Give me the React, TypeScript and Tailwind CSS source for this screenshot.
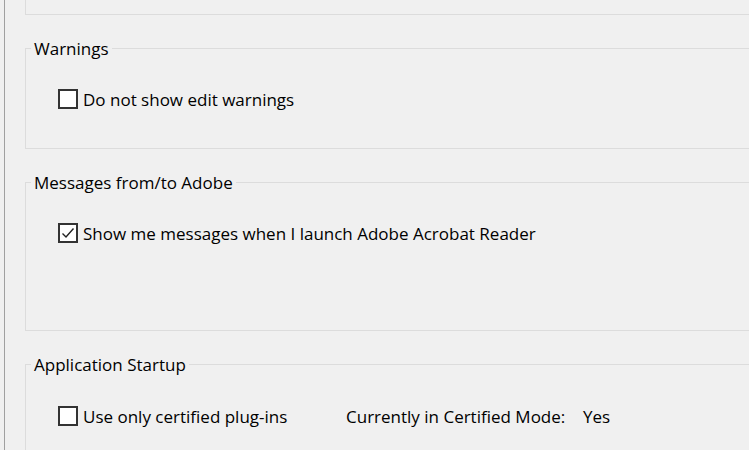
import React from 'react';

const Checkbox: React.FC<{ checked?: boolean; label: string }> = ({ checked, label }) => (
  <label className="flex items-center gap-[5px] h-6">
    <span className="w-5 h-5 border-2 border-[#333] bg-white flex items-center justify-center">
      {checked && (
        <svg width="16" height="16" viewBox="0 0 16 16" fill="none">
          <path d="M2.5 8.5 L6 12 L13.5 3.5" stroke="#222" strokeWidth="1.4" />
        </svg>
      )}
    </span>
    <span className="relative top-[1px]">{label}</span>
  </label>
);

const Group: React.FC<{ title: string; bodyHeight: string; children: React.ReactNode }> = ({ title, bodyHeight, children }) => (
  <fieldset className="border border-[#dcdcdc] w-[760px] shrink-0">
    <legend className="ml-[5px] px-[3px] leading-6">
      <span className="relative top-[1px]">{title}</span>
    </legend>
    <div className={`${bodyHeight} pt-[27px] pl-[32px]`}>{children}</div>
  </fieldset>
);

const App: React.FC = () => {
  return (
    <div
      className="w-[749px] h-[450px] bg-[#f0f0f0] overflow-hidden flex text-[17px] text-black"
      style={{ fontFamily: '"Open Sans", "Noto Sans", sans-serif' }}
    >
      <div className="w-[4px] shrink-0" />
      <div className="flex-1 border-l border-[#a0a0a0] pl-[20px] flex flex-col gap-[21px]">
        <div className="h-[15px] w-[760px] shrink-0 border-l border-b border-[#dcdcdc]" />

        <Group title="Warnings" bodyHeight="h-[88px]">
          <Checkbox label="Do not show edit warnings" />
        </Group>

        <Group title="Messages from/to Adobe" bodyHeight="h-[136px]">
          <Checkbox checked label="Show me messages when I launch Adobe Acrobat Reader" />
        </Group>

        <Group title="Application Startup" bodyHeight="h-[120px]">
          <div className="flex items-center">
            <div className="w-[288px]">
              <Checkbox label="Use only certified plug-ins" />
            </div>
            <span className="relative top-[1px] w-[237px]">Currently in Certified Mode:</span>
            <span className="relative top-[1px]">Yes</span>
          </div>
        </Group>
      </div>
    </div>
  );
};

export default App;
